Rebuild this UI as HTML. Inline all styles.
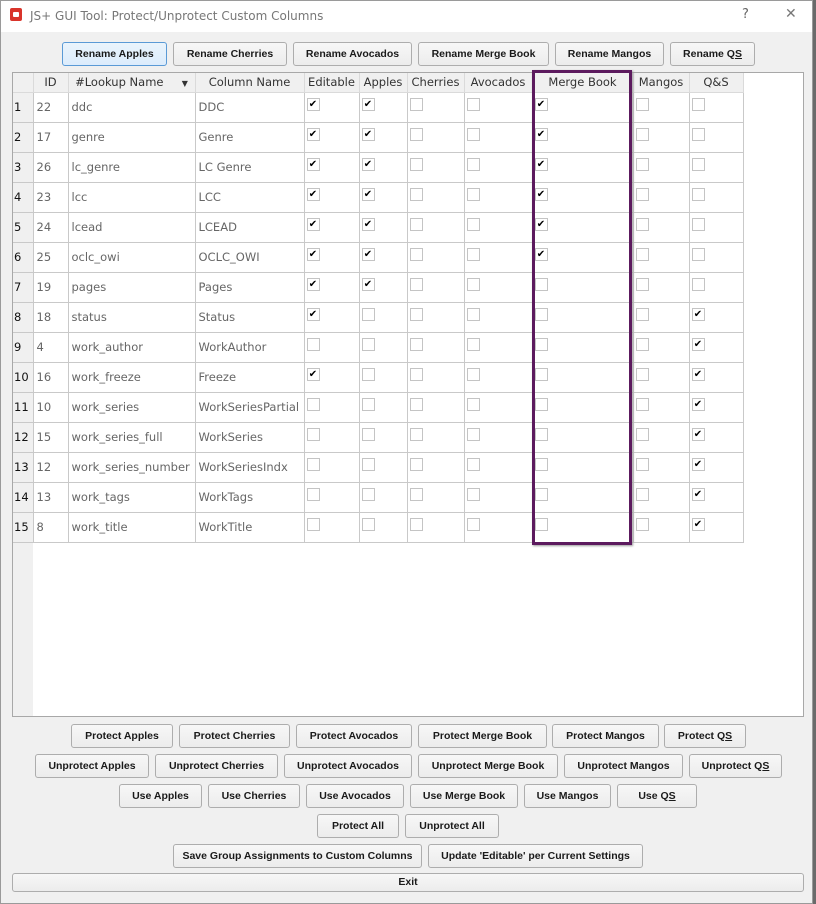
<!DOCTYPE html>
<html><head><meta charset="utf-8"><style>
*{margin:0;padding:0;box-sizing:border-box}
body{width:816px;height:904px;background:#6a6a6a;position:relative;overflow:hidden;font-family:"DejaVu Sans","Liberation Sans",sans-serif}
#win{position:absolute;left:0;top:0;width:813px;height:904px;background:#f0f0f0;box-shadow:inset 0 0 0 1px #9a9a9a}
#title{position:absolute;left:1px;top:1px;width:811px;height:31px;background:#fff;font-size:12px;color:#777}
#title .t{position:absolute;left:29px;top:8px;font-family:"DejaVu Sans",sans-serif;font-size:12px}
#title .ic{position:absolute;left:9px;top:7px;width:12px;height:13px;background:#d9342b;border-radius:2px}
#title .ic:after{content:"";position:absolute;left:3px;top:4px;width:6px;height:5px;background:#fff;border-radius:1px}
#title .q{position:absolute;left:741px;top:6px;font-size:13px;color:#666}
#title .x{position:absolute;left:784px;top:5px;font-size:14px;color:#777;font-weight:lighter}
.b{position:absolute;height:24px;background:linear-gradient(#f7f7f7,#ececec);border:1px solid #adadad;border-radius:3px;font-family:"Liberation Sans",sans-serif;font-weight:bold;font-size:10.5px;color:#1a1a1a;text-align:center;line-height:22px;white-space:nowrap}
.b.sel{border-color:#5a9ad6;background:linear-gradient(#eaf4fc,#dcecfc)}
u{text-decoration:underline}
#frame{position:absolute;left:12px;top:72px;width:792px;height:645px;background:#fff;border:1px solid #a8a8a8}
#rh{position:absolute;left:13px;top:73px;width:20px;height:643px;background:#f0f0f0}
table{position:absolute;left:13px;top:73px;border-collapse:collapse;table-layout:fixed;font-size:11.5px}
td,th{border:1px solid #c9c9c9;overflow:hidden;white-space:nowrap;padding:0 0 0 3px;text-align:left;vertical-align:middle}
th{height:19px;background:#f0f0f0;font-weight:normal;color:#333;text-align:center;padding:0;border-top:none;border-color:#dadada}
td{height:30px;color:#666;background:#fff}
td.n{background:#f0f0f0;color:#111;padding-left:1px}
tr td:first-child,tr th:first-child{border-left:none}
.c{display:inline-block;width:13px;height:13px;border:1px solid #c4c4c4;background:#fff;vertical-align:middle;margin-left:-1px;margin-top:-6px;font-style:normal;font-size:10px;line-height:11px;color:#000;text-align:center}
#mb{position:absolute;left:532px;top:70px;width:100px;height:475px;border:3px solid #5c1a5e;box-shadow:1px 1px 2px #999}
</style></head><body><div id="win">
<div id="title"><div class="ic"></div><div class="t">JS+ GUI Tool: Protect/Unprotect Custom Columns</div><div class="q">?</div><div class="x">✕</div></div>

<div class="b sel" style="left:62px;top:42px;width:105px">Rename Apples</div>
<div class="b" style="left:173px;top:42px;width:114px">Rename Cherries</div>
<div class="b" style="left:293px;top:42px;width:119px">Rename Avocados</div>
<div class="b" style="left:418px;top:42px;width:131px">Rename Merge Book</div>
<div class="b" style="left:555px;top:42px;width:109px">Rename Mangos</div>
<div class="b" style="left:670px;top:42px;width:85px">Rename Q<u>S</u></div>

<div id="frame"></div><div id="rh"></div>
<table>
<colgroup><col style="width:20px"><col style="width:35px"><col style="width:127px"><col style="width:109px"><col style="width:55px"><col style="width:48px"><col style="width:57px"><col style="width:68px"><col style="width:101px"><col style="width:56px"><col style="width:54px"></colgroup>
<tr><th></th><th>ID</th><th>#Lookup Name &nbsp; &nbsp; <span style="font-size:8px">▼</span></th><th>Column Name</th><th>Editable</th><th>Apples</th><th>Cherries</th><th>Avocados</th><th>Merge Book</th><th>Mangos</th><th>Q&amp;S</th></tr>
<tr><td class="n">1</td><td>22</td><td>ddc</td><td>DDC</td><td><i class="c">✔</i></td><td><i class="c">✔</i></td><td><i class="c"></i></td><td><i class="c"></i></td><td><i class="c">✔</i></td><td><i class="c"></i></td><td><i class="c"></i></td></tr>
<tr><td class="n">2</td><td>17</td><td>genre</td><td>Genre</td><td><i class="c">✔</i></td><td><i class="c">✔</i></td><td><i class="c"></i></td><td><i class="c"></i></td><td><i class="c">✔</i></td><td><i class="c"></i></td><td><i class="c"></i></td></tr>
<tr><td class="n">3</td><td>26</td><td>lc_genre</td><td>LC Genre</td><td><i class="c">✔</i></td><td><i class="c">✔</i></td><td><i class="c"></i></td><td><i class="c"></i></td><td><i class="c">✔</i></td><td><i class="c"></i></td><td><i class="c"></i></td></tr>
<tr><td class="n">4</td><td>23</td><td>lcc</td><td>LCC</td><td><i class="c">✔</i></td><td><i class="c">✔</i></td><td><i class="c"></i></td><td><i class="c"></i></td><td><i class="c">✔</i></td><td><i class="c"></i></td><td><i class="c"></i></td></tr>
<tr><td class="n">5</td><td>24</td><td>lcead</td><td>LCEAD</td><td><i class="c">✔</i></td><td><i class="c">✔</i></td><td><i class="c"></i></td><td><i class="c"></i></td><td><i class="c">✔</i></td><td><i class="c"></i></td><td><i class="c"></i></td></tr>
<tr><td class="n">6</td><td>25</td><td>oclc_owi</td><td>OCLC_OWI</td><td><i class="c">✔</i></td><td><i class="c">✔</i></td><td><i class="c"></i></td><td><i class="c"></i></td><td><i class="c">✔</i></td><td><i class="c"></i></td><td><i class="c"></i></td></tr>
<tr><td class="n">7</td><td>19</td><td>pages</td><td>Pages</td><td><i class="c">✔</i></td><td><i class="c">✔</i></td><td><i class="c"></i></td><td><i class="c"></i></td><td><i class="c"></i></td><td><i class="c"></i></td><td><i class="c"></i></td></tr>
<tr><td class="n">8</td><td>18</td><td>status</td><td>Status</td><td><i class="c">✔</i></td><td><i class="c"></i></td><td><i class="c"></i></td><td><i class="c"></i></td><td><i class="c"></i></td><td><i class="c"></i></td><td><i class="c">✔</i></td></tr>
<tr><td class="n">9</td><td>4</td><td>work_author</td><td>WorkAuthor</td><td><i class="c"></i></td><td><i class="c"></i></td><td><i class="c"></i></td><td><i class="c"></i></td><td><i class="c"></i></td><td><i class="c"></i></td><td><i class="c">✔</i></td></tr>
<tr><td class="n">10</td><td>16</td><td>work_freeze</td><td>Freeze</td><td><i class="c">✔</i></td><td><i class="c"></i></td><td><i class="c"></i></td><td><i class="c"></i></td><td><i class="c"></i></td><td><i class="c"></i></td><td><i class="c">✔</i></td></tr>
<tr><td class="n">11</td><td>10</td><td>work_series</td><td>WorkSeriesPartial</td><td><i class="c"></i></td><td><i class="c"></i></td><td><i class="c"></i></td><td><i class="c"></i></td><td><i class="c"></i></td><td><i class="c"></i></td><td><i class="c">✔</i></td></tr>
<tr><td class="n">12</td><td>15</td><td>work_series_full</td><td>WorkSeries</td><td><i class="c"></i></td><td><i class="c"></i></td><td><i class="c"></i></td><td><i class="c"></i></td><td><i class="c"></i></td><td><i class="c"></i></td><td><i class="c">✔</i></td></tr>
<tr><td class="n">13</td><td>12</td><td>work_series_number</td><td>WorkSeriesIndx</td><td><i class="c"></i></td><td><i class="c"></i></td><td><i class="c"></i></td><td><i class="c"></i></td><td><i class="c"></i></td><td><i class="c"></i></td><td><i class="c">✔</i></td></tr>
<tr><td class="n">14</td><td>13</td><td>work_tags</td><td>WorkTags</td><td><i class="c"></i></td><td><i class="c"></i></td><td><i class="c"></i></td><td><i class="c"></i></td><td><i class="c"></i></td><td><i class="c"></i></td><td><i class="c">✔</i></td></tr>
<tr><td class="n">15</td><td>8</td><td>work_title</td><td>WorkTitle</td><td><i class="c"></i></td><td><i class="c"></i></td><td><i class="c"></i></td><td><i class="c"></i></td><td><i class="c"></i></td><td><i class="c"></i></td><td><i class="c">✔</i></td></tr>
</table>
<div id="mb"></div>

<div class="b" style="left:71px;top:724px;width:102px">Protect Apples</div>
<div class="b" style="left:179px;top:724px;width:111px">Protect Cherries</div>
<div class="b" style="left:296px;top:724px;width:116px">Protect Avocados</div>
<div class="b" style="left:418px;top:724px;width:129px">Protect Merge Book</div>
<div class="b" style="left:552px;top:724px;width:107px">Protect Mangos</div>
<div class="b" style="left:664px;top:724px;width:82px">Protect Q<u>S</u></div>

<div class="b" style="left:35px;top:754px;width:114px">Unprotect Apples</div>
<div class="b" style="left:155px;top:754px;width:123px">Unprotect Cherries</div>
<div class="b" style="left:284px;top:754px;width:128px">Unprotect Avocados</div>
<div class="b" style="left:418px;top:754px;width:140px">Unprotect Merge Book</div>
<div class="b" style="left:564px;top:754px;width:119px">Unprotect Mangos</div>
<div class="b" style="left:689px;top:754px;width:93px">Unprotect Q<u>S</u></div>

<div class="b" style="left:119px;top:784px;width:83px">Use Apples</div>
<div class="b" style="left:208px;top:784px;width:92px">Use Cherries</div>
<div class="b" style="left:306px;top:784px;width:98px">Use Avocados</div>
<div class="b" style="left:410px;top:784px;width:108px">Use Merge Book</div>
<div class="b" style="left:524px;top:784px;width:87px">Use Mangos</div>
<div class="b" style="left:617px;top:784px;width:80px">Use Q<u>S</u></div>

<div class="b" style="left:317px;top:814px;width:82px">Protect All</div>
<div class="b" style="left:405px;top:814px;width:94px">Unprotect All</div>

<div class="b" style="left:173px;top:844px;width:249px">Save Group Assignments to Custom Columns</div>
<div class="b" style="left:428px;top:844px;width:215px">Update 'Editable' per Current Settings</div>

<div class="b" style="left:12px;top:873px;width:792px;height:19px;line-height:17px">Exit</div>
</div></body></html>
